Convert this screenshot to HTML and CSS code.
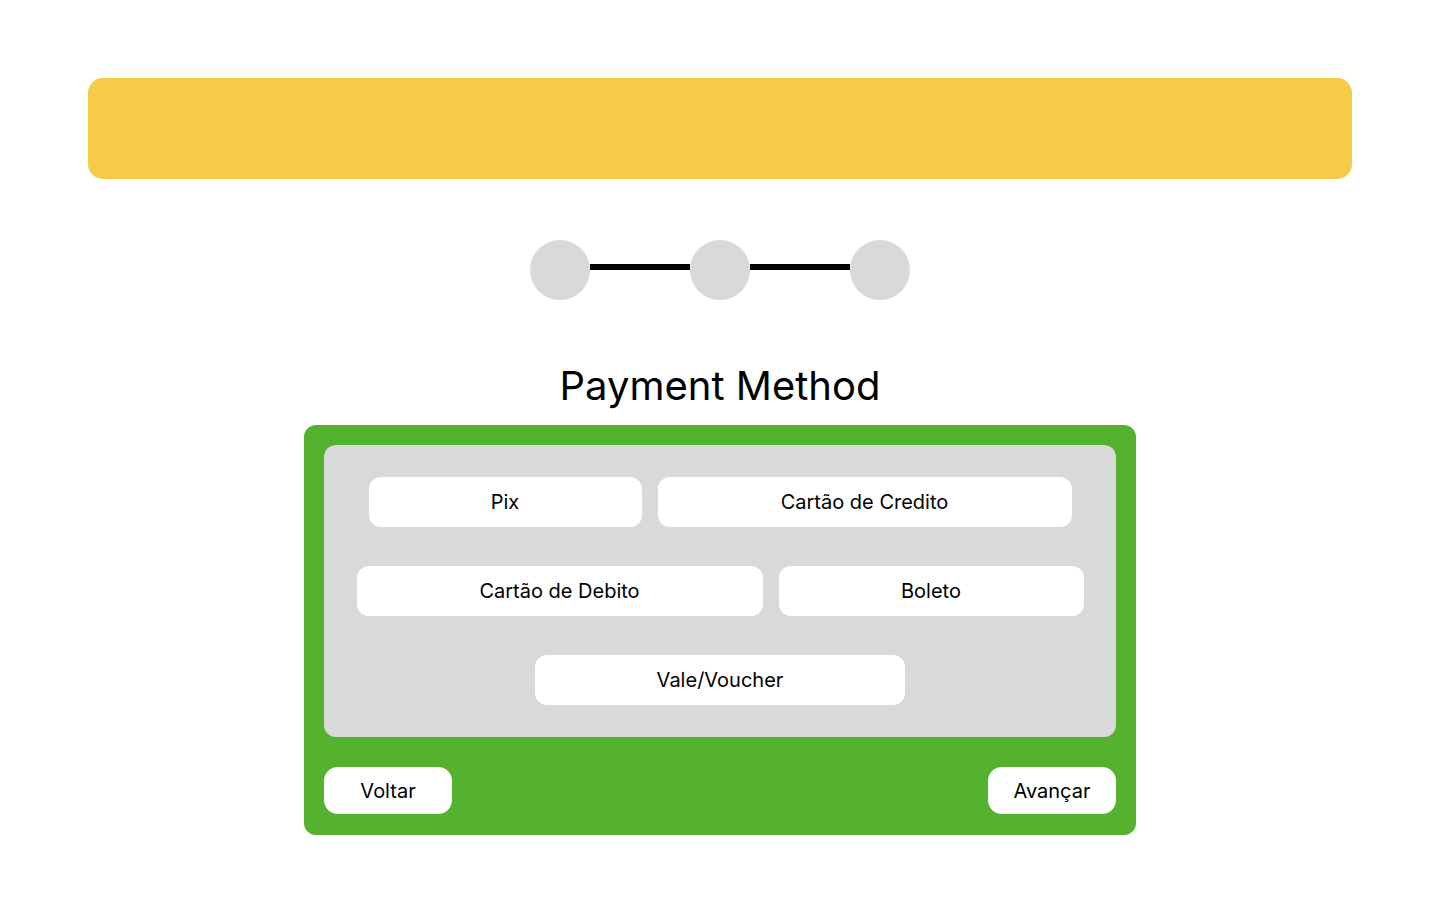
FILE: index.html
```html
<!DOCTYPE html>
<html lang="pt">
<head>
<meta charset="utf-8">
<title>Payment Method</title>
<link rel="stylesheet" href="styles.css">
</head>
<body>
<header class="topbar"></header>
<div class="stepper">
  <span class="step"></span>
  <span class="connector"></span>
  <span class="step"></span>
  <span class="connector"></span>
  <span class="step"></span>
</div>
<h1 class="title">Payment Method</h1>
<section class="card">
  <div class="options">
    <div class="row">
      <button class="opt w-pix">Pix</button>
      <button class="opt w-credito">Cartão de Credito</button>
    </div>
    <div class="row">
      <button class="opt w-debito">Cartão de Debito</button>
      <button class="opt w-boleto">Boleto</button>
    </div>
    <div class="row">
      <button class="opt w-vale">Vale/Voucher</button>
    </div>
  </div>
  <div class="actions">
    <button class="nav">Voltar</button>
    <button class="nav">Avançar</button>
  </div>
</section>
</body>
</html>
```
FILE: styles.css
```css
* { box-sizing: border-box; }
html, body { margin: 0; padding: 0; background: #fff; }
body {
  font-family: Inter, "Noto Sans", sans-serif;
  color: #000;
  display: flex;
  flex-direction: column;
  align-items: center;
}
.topbar {
  width: 1264px;
  height: 101px;
  margin-top: 78px;
  background: #F6CB47;
  border-radius: 15px;
}
.stepper {
  margin-top: 61px;
  display: flex;
  align-items: flex-start;
  height: 60px;
}
.step {
  width: 60px;
  height: 60px;
  border-radius: 50%;
  background: #D9D9D9;
}
.connector {
  width: 100px;
  height: 6px;
  margin-top: 24px;
  background: #000;
}
.title {
  margin: 61px 0 0;
  font-size: 40px;
  font-weight: 400;
  line-height: 50px;
  height: 64px;
}
.card {
  width: 832px;
  height: 410px;
  background: #55B22F;
  border-radius: 12px;
  padding: 20px 20px 21px;
  display: flex;
  flex-direction: column;
}
.options {
  background: #D9D9D9;
  border-radius: 12px;
  padding: 32px 0;
  display: flex;
  flex-direction: column;
  gap: 39px;
  height: 292px;
}
.row {
  display: flex;
  justify-content: center;
  gap: 16px;
}
.opt, .nav {
  font-family: Inter, "Noto Sans", sans-serif;
  font-size: 20px;
  color: #000;
  background: #fff;
  border: none;
  padding: 0;
  height: 50px;
  border-radius: 12px;
}
.w-pix { width: 273px; }
.w-credito { width: 414px; }
.w-debito { width: 406px; }
.w-boleto { width: 305px; }
.w-vale { width: 370px; }
.actions {
  margin-top: 30px;
  display: flex;
  justify-content: space-between;
}
.nav {
  width: 128px;
  height: 47px;
  border-radius: 14px;
}
```
